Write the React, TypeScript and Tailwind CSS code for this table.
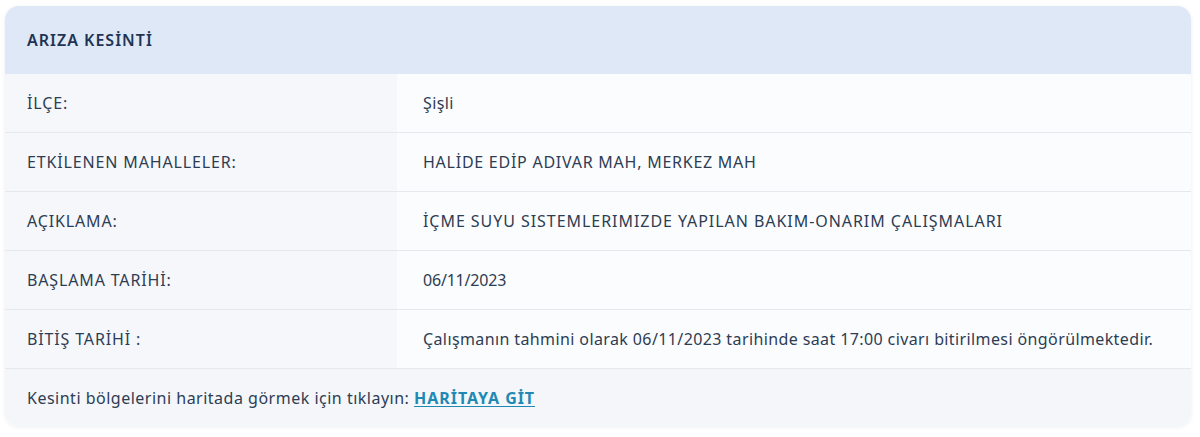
import React from "react";

const rows: [string, string, string][] = [
  ["İLÇE:", "Şişli", "tracking-[0.4px]"],
  ["ETKİLENEN MAHALLELER:", "HALİDE EDİP ADIVAR MAH, MERKEZ MAH", "tracking-[0.75px]"],
  ["AÇIKLAMA:", "İÇME SUYU SISTEMLERIMIZDE YAPILAN BAKIM-ONARIM ÇALIŞMALARI", "tracking-[0.95px]"],
  ["BAŞLAMA TARİHİ:", "06/11/2023", "tracking-[-0.2px]"],
  ["BİTİŞ TARİHİ :", "Çalışmanın tahmini olarak 06/11/2023 tarihinde saat 17:00 civarı bitirilmesi öngörülmektedir.", "tracking-[0.39px]"],
];

export default function App() {
  return (
    <div className="w-[1200px] h-[437px] bg-white pt-[6px] px-[5px] pr-[9px]" style={{ fontFamily: "'Noto Sans', sans-serif" }}>
      <div className="rounded-[14px] overflow-hidden shadow-[0_1px_4px_rgba(30,50,80,0.08)] text-[16px] text-[#2d3d53]">
        <div className="h-[68px] bg-[#dfe8f6] flex items-center pl-[22px] font-semibold text-[#1f3454] tracking-[1px]">
          ARIZA KESİNTİ
        </div>
        {rows.map(([k, v, t]) => (
          <div key={k} className="grid grid-cols-[392px_1fr] h-[59px] border-b border-[#e5e8ed]">
            <div className="bg-[#f5f7fb] flex items-center pl-[22px] tracking-[0.85px]">{k}</div>
            <div className={`bg-[#fbfcfe] flex items-center pl-[26px] ${t}`}>{v}</div>
          </div>
        ))}
        <div className="h-[57px] bg-[#f4f6fa] flex items-center pl-[22px] tracking-[0.5px]">
          <span>Kesinti bölgelerini haritada görmek için tıklayın:&nbsp;</span>
          <a href="#" className="font-bold text-[#1f89b4] underline underline-offset-2 tracking-[0.95px]">HARİTAYA GİT</a>
        </div>
      </div>
    </div>
  );
}
